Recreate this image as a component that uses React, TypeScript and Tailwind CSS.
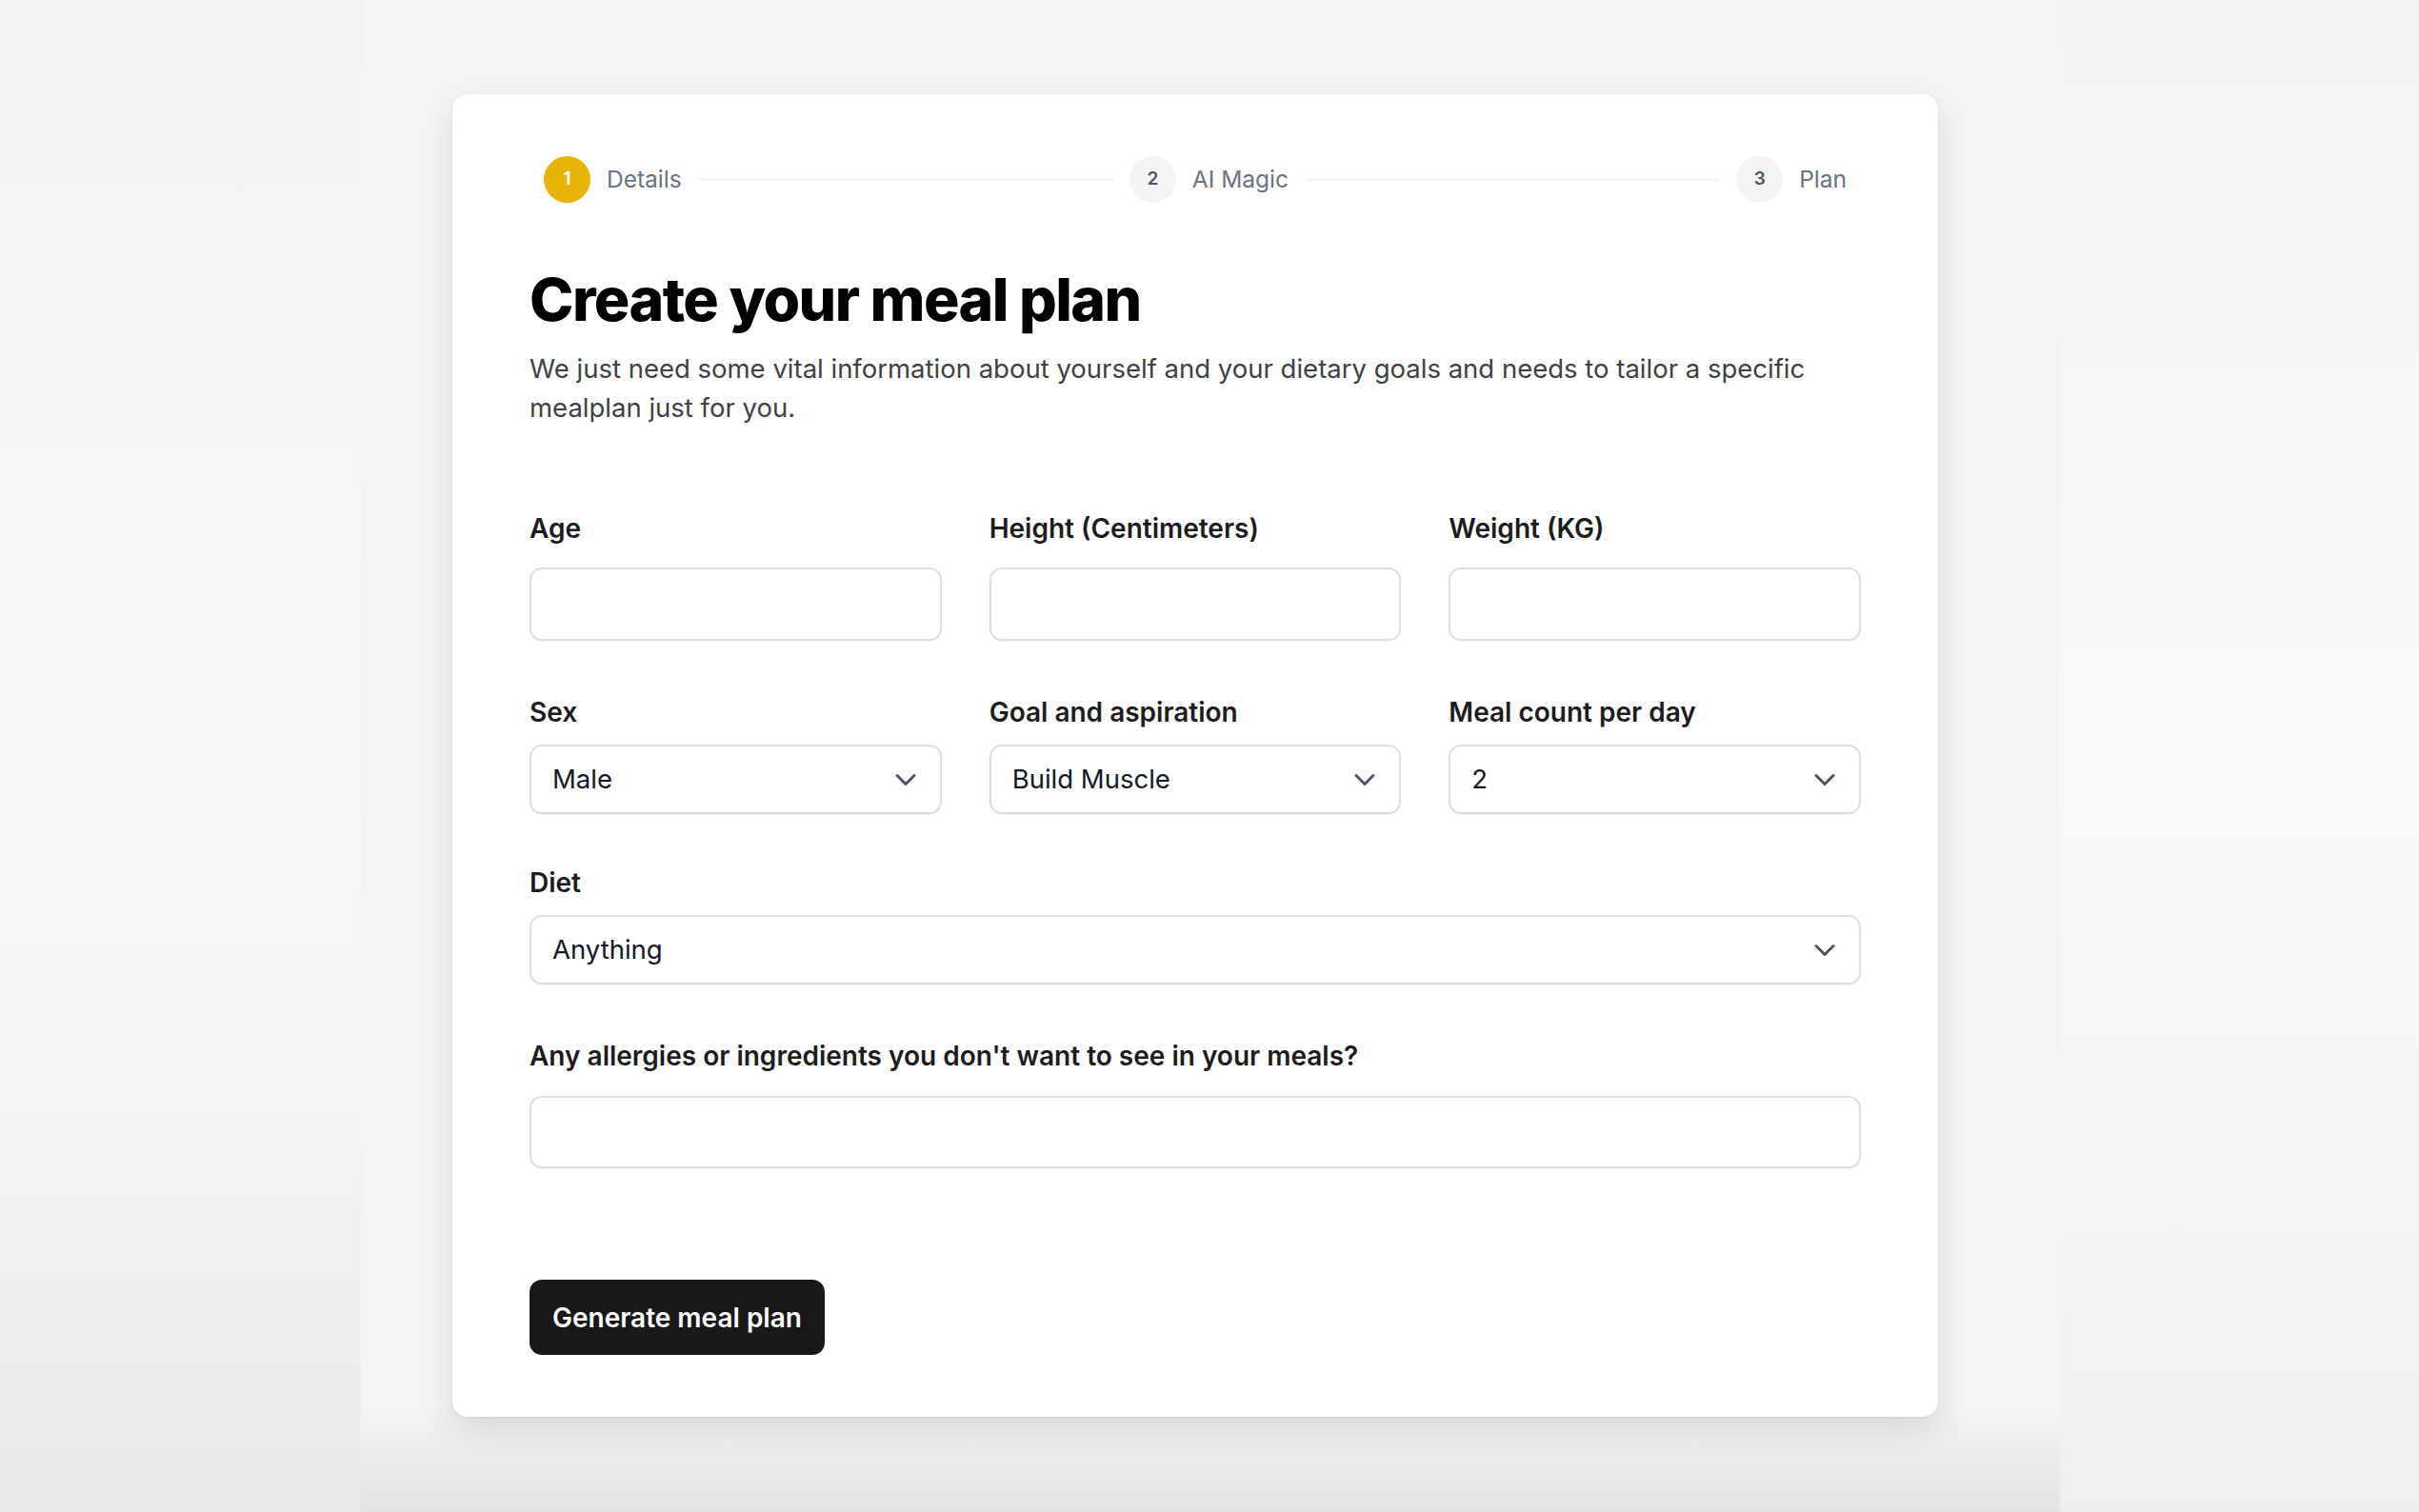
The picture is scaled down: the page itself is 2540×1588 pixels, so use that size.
import { ChevronDown } from "lucide-react";

const font = { fontFamily: "Inter, 'Noto Sans', sans-serif" };

const inputClass =
  "w-full rounded-[13px] border-2 border-[#dedee2] bg-white shadow-[0_1px_2px_rgba(0,0,0,0.05)] outline-none";

function Step({ n, label, active }: { n: number; label: string; active?: boolean }) {
  return (
    <div className="flex items-center gap-[17px]">
      <div
        className={
          active
            ? "flex h-[49px] w-[49px] items-center justify-center rounded-full bg-[#eab308] text-[19px] font-semibold text-white"
            : "flex h-[49px] w-[49px] items-center justify-center rounded-full bg-[#f3f4f6] text-[19px] font-semibold text-[#4b5563]"
        }
      >
        {n}
      </div>
      <span className="text-[24.5px] text-[#6b7280]">{label}</span>
    </div>
  );
}

function Line() {
  return <div className="mx-[16px] h-[3px] flex-1 rounded-full bg-[#f3f4f6]" />;
}

function Select({ value }: { value: string }) {
  return (
    <div className={inputClass + " flex h-[73px] items-center justify-between pl-[22px] pr-[18px]"}>
      <span className="text-[27.5px] text-[#111827]">{value}</span>
      <ChevronDown size={36} strokeWidth={2} className="text-[#4b5563]" />
    </div>
  );
}

function Label({ children }: { children: React.ReactNode }) {
  return <label className="block text-[28px] font-semibold leading-[40px] text-[#1c1c1e]">{children}</label>;
}

export default function App() {
  return (
    <div className="flex h-screen w-full overflow-hidden" style={font}>
      <div className="w-[378px] bg-[linear-gradient(to_bottom,#f2f2f2_0%,#f8f8f8_45%,#f5f5f5_70%,#e9e9e9_100%)]" />
      <div className="w-[1785px] bg-[linear-gradient(to_bottom,#f4f4f4_0%,#f4f4f4_93%,#e3e3e3_100%)] pl-[97px] pt-[99px]">
        <div className="w-[1560px] rounded-[16px] bg-white px-[81px] pb-[65px] pt-[65px] shadow-[0_14px_36px_rgba(0,0,0,0.11),0_1px_3px_rgba(0,0,0,0.08)]">
          <div className="flex items-center px-[15px]">
            <Step n={1} label="Details" active />
            <Line />
            <Step n={2} label="AI Magic" />
            <Line />
            <Step n={3} label="Plan" />
          </div>

          <h1 className="mt-[67px] text-[62.5px] font-extrabold leading-[68px] tracking-tight text-black">
            Create your meal plan
          </h1>
          <p className="mt-[19px] text-[27.5px] leading-[41px] text-[#3f3f46]">
            We just need some vital information about yourself and your dietary goals and needs to tailor a specific
            mealplan just for you.
          </p>

          <div className="mt-[86px] grid grid-cols-3 gap-x-[50px]">
            <div>
              <Label>Age</Label>
              <input className={inputClass + " mt-[21px] h-[77px]"} />
            </div>
            <div>
              <Label>Height (Centimeters)</Label>
              <input className={inputClass + " mt-[21px] h-[77px]"} />
            </div>
            <div>
              <Label>Weight (KG)</Label>
              <input className={inputClass + " mt-[21px] h-[77px]"} />
            </div>
          </div>

          <div className="mt-[55px] grid grid-cols-3 gap-x-[50px]">
            <div>
              <Label>Sex</Label>
              <div className="mt-[14px]">
                <Select value="Male" />
              </div>
            </div>
            <div>
              <Label>Goal and aspiration</Label>
              <div className="mt-[14px]">
                <Select value="Build Muscle" />
              </div>
            </div>
            <div>
              <Label>Meal count per day</Label>
              <div className="mt-[14px]">
                <Select value="2" />
              </div>
            </div>
          </div>

          <div className="mt-[52px]">
            <Label>Diet</Label>
            <div className="mt-[14px]">
              <Select value="Anything" />
            </div>
          </div>

          <div className="mt-[55px]">
            <Label>Any allergies or ingredients you don't want to see in your meals?</Label>
            <input className={inputClass + " mt-[22px] h-[76px]"} />
          </div>

          <button className="mt-[117px] h-[79px] rounded-[13px] bg-[#18181b] px-[24px] text-[28px] font-semibold text-white">
            Generate meal plan
          </button>
        </div>
      </div>
      <div className="flex-1 bg-[linear-gradient(to_bottom,#f3f3f3_0%,#f9f9f9_50%,#f4f4f4_80%,#efefef_100%)]" />
    </div>
  );
}
